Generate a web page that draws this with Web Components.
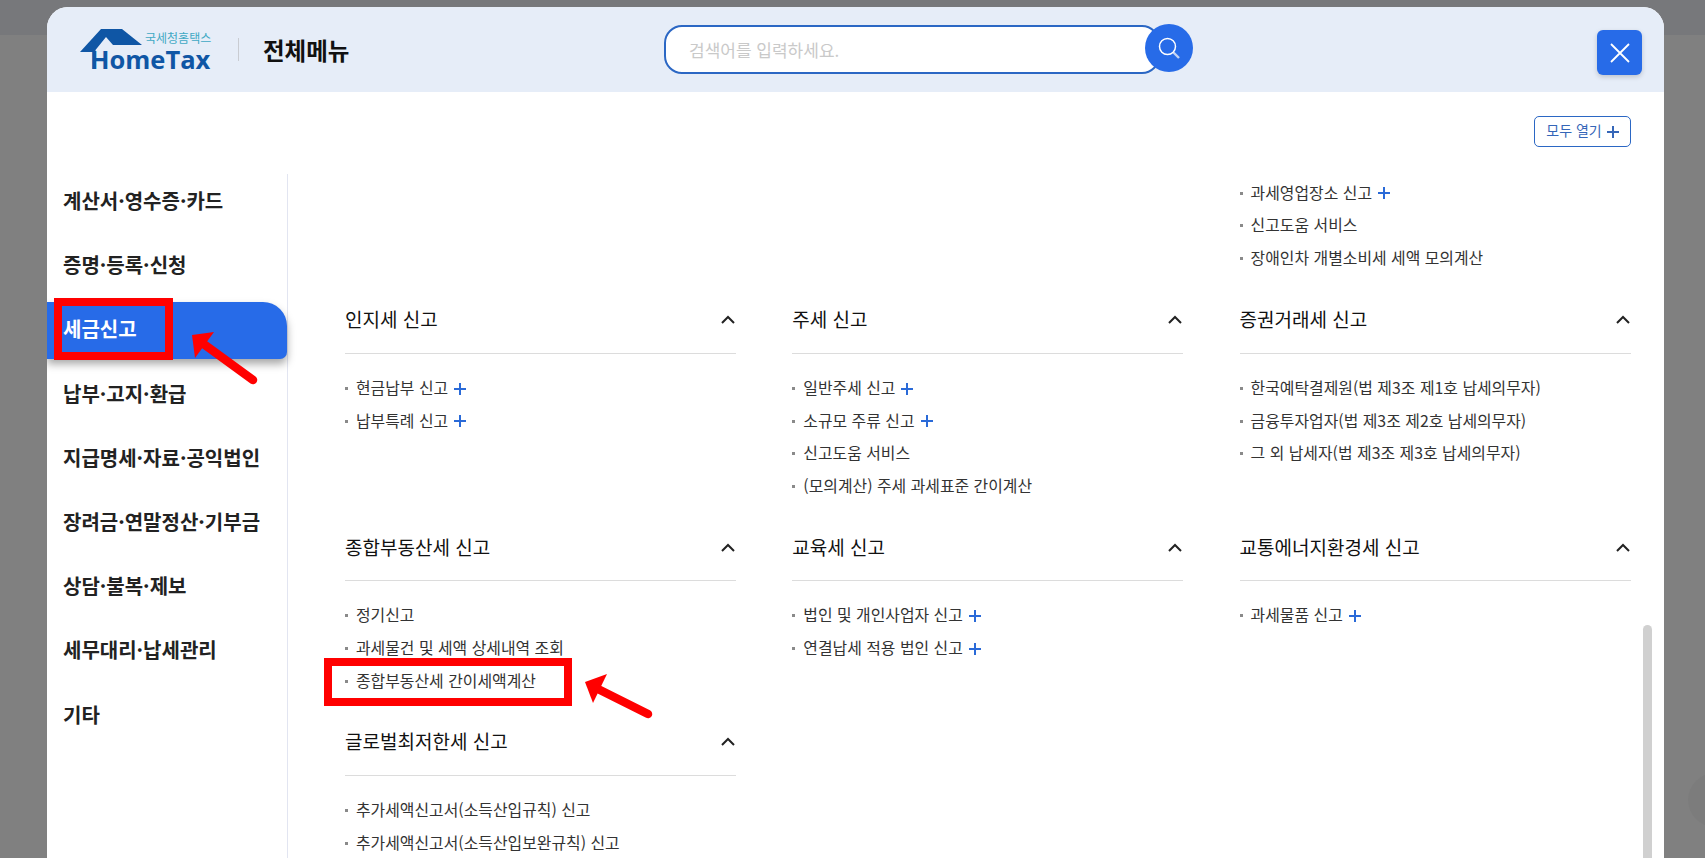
<!DOCTYPE html>
<html lang="ko">
<head>
<meta charset="utf-8">
<title>전체메뉴</title>
<style>
  html, body { margin: 0; height: 100%; overflow: hidden; }
  body { font-family: "Noto Sans CJK KR", "Noto Sans", sans-serif; background: #808080; }
</style>
</head>
<body>
<ht-backdrop>
  <ht-modal>
    <ht-logo slot="logo"></ht-logo>
    <ht-search slot="search" placeholder="검색어를 입력하세요."></ht-search>

    <ht-side-item slot="side">계산서·영수증·카드</ht-side-item>
    <ht-side-item slot="side">증명·등록·신청</ht-side-item>
    <ht-side-item slot="side" active>세금신고</ht-side-item>
    <ht-side-item slot="side">납부·고지·환급</ht-side-item>
    <ht-side-item slot="side">지급명세·자료·공익법인</ht-side-item>
    <ht-side-item slot="side">장려금·연말정산·기부금</ht-side-item>
    <ht-side-item slot="side">상담·불복·제보</ht-side-item>
    <ht-side-item slot="side">세무대리·납세관리</ht-side-item>
    <ht-side-item slot="side">기타</ht-side-item>

    <div></div>
    <div></div>
    <ht-section tail>
      <ht-link more>과세영업장소 신고</ht-link>
      <ht-link>신고도움 서비스</ht-link>
      <ht-link>장애인차 개별소비세 세액 모의계산</ht-link>
    </ht-section>

    <ht-section title="인지세 신고">
      <ht-link more>현금납부 신고</ht-link>
      <ht-link more>납부특례 신고</ht-link>
    </ht-section>
    <ht-section title="주세 신고">
      <ht-link more>일반주세 신고</ht-link>
      <ht-link more>소규모 주류 신고</ht-link>
      <ht-link>신고도움 서비스</ht-link>
      <ht-link>(모의계산) 주세 과세표준 간이계산</ht-link>
    </ht-section>
    <ht-section title="증권거래세 신고">
      <ht-link>한국예탁결제원(법 제3조 제1호 납세의무자)</ht-link>
      <ht-link>금융투자업자(법 제3조 제2호 납세의무자)</ht-link>
      <ht-link>그 외 납세자(법 제3조 제3호 납세의무자)</ht-link>
    </ht-section>

    <ht-section title="종합부동산세 신고">
      <ht-link>정기신고</ht-link>
      <ht-link>과세물건 및 세액 상세내역 조회</ht-link>
      <ht-link>종합부동산세 간이세액계산</ht-link>
    </ht-section>
    <ht-section title="교육세 신고">
      <ht-link more>법인 및 개인사업자 신고</ht-link>
      <ht-link more>연결납세 적용 법인 신고</ht-link>
    </ht-section>
    <ht-section title="교통에너지환경세 신고">
      <ht-link more>과세물품 신고</ht-link>
    </ht-section>

    <ht-section title="글로벌최저한세 신고">
      <ht-link>추가세액신고서(소득산입규칙) 신고</ht-link>
      <ht-link>추가세액신고서(소득산입보완규칙) 신고</ht-link>
    </ht-section>
  </ht-modal>
  <ht-marks></ht-marks>
</ht-backdrop>

<script>
class HtBackdrop extends HTMLElement {
  connectedCallback() {
    this.attachShadow({ mode: 'open' });
    this.shadowRoot.innerHTML = `
      <style>
        :host { display: block; position: relative; height: 100vh; overflow: hidden; background: #808080; }
        .band { height: 35px; background: #77787b; }
        .bubble {
          position: absolute; left: 1688px; top: 773px;
          width: 54px; height: 54px; border-radius: 50%;
          background: #7c7c7c;
        }
      </style>
      <div class="band"></div>
      <div class="bubble"></div>
      <slot></slot>
    `;
  }
}

class HtLogo extends HTMLElement {
  connectedCallback() {
    this.attachShadow({ mode: 'open' });
    this.shadowRoot.innerHTML = `
      <style>
        :host { display: block; position: relative; width: 132px; height: 42px; }
        svg { position: absolute; left: 0; top: 0; }
        .ko {
          position: absolute; left: 65px; top: 2px;
          font-size: 12px; line-height: 14px; color: #3fa9c4; white-space: nowrap;
        }
        .en {
          position: absolute; left: 10px; top: 20px;
          font: 700 25.5px/20px "Open Sans", sans-serif; color: #0f56a5;
          white-space: nowrap;
        }
      </style>
      <svg width="132" height="42" viewBox="0 0 132 42">
        <path fill="#0f56a5" d="M21 0H42L62 16H33L26 8 15.500 21V40H12.500V23H0Z"/>
      </svg>
      <span class="ko">국세청홈택스</span>
      <span class="en">HomeTax</span>
    `;
  }
}

class HtSearch extends HTMLElement {
  connectedCallback() {
    this.attachShadow({ mode: 'open' });
    this.shadowRoot.innerHTML = `
      <style>
        :host { display: block; position: relative; width: 530px; height: 49px; }
        .box {
          box-sizing: border-box; width: 496px; height: 49px;
          border: 2px solid #2b67c4; border-radius: 18px; background: #fff;
          padding: 0 23px; display: flex; align-items: center;
          font-size: 17px; color: #c9c9c9;
        }
        button {
          position: absolute; left: 481px; top: -1px;
          width: 48px; height: 48px; border: 0; padding: 0; border-radius: 50%;
          background: #276be8; display: flex; align-items: center; justify-content: center;
        }
      </style>
      <div class="box">${this.getAttribute('placeholder')}</div>
      <button aria-label="검색">
        <svg width="24" height="24" viewBox="0 0 24 24" fill="none">
          <path d="M16.500 16.500l5.500 5.500" stroke="#c4d4f4" stroke-width="2.400"/>
          <circle cx="10.500" cy="10.500" r="8" stroke="#fff" stroke-width="1.500"/>
        </svg>
      </button>
    `;
  }
}

class HtSideItem extends HTMLElement {
  connectedCallback() {
    this.attachShadow({ mode: 'open' });
    this.shadowRoot.innerHTML = `
      <style>
        :host {
          display: flex; align-items: center; box-sizing: border-box;
          height: 57px; margin-bottom: 7.2px; padding: 0 0 4px 16px;
          font-size: 20px; font-weight: 700; color: #222; white-space: nowrap;
        }
        :host([active]) {
          background: #276be8; color: #fff;
          border-radius: 0 24px 7px 0;
          box-shadow: 0 5px 8px rgba(0,0,0,.35);
        }
      </style>
      <slot></slot>
    `;
  }
}

class HtLink extends HTMLElement {
  connectedCallback() {
    this.attachShadow({ mode: 'open' });
    const more = this.hasAttribute('more') ? `
      <svg width="12" height="12" viewBox="0 0 12 12" stroke="#2a6ad8" stroke-width="2">
        <path d="M6 0V12M0 6H12"/>
      </svg>` : '';
    this.shadowRoot.innerHTML = `
      <style>
        :host {
          display: flex; align-items: center; gap: 6px; height: 32.6px;
          font-size: 15.9px; color: #333; white-space: nowrap;
        }
        .dot { width: 3px; height: 3px; background: #8a8a8a; margin-right: 2px; flex: none; }
        span.t { margin-top: -2px; }
      </style>
      <i class="dot"></i><span class="t"><slot></slot></span>${more}
    `;
  }
}

class HtSection extends HTMLElement {
  connectedCallback() {
    this.attachShadow({ mode: 'open' });
    const head = this.hasAttribute('tail') ? '' : `
      <header>
        <h3>${this.getAttribute('title')}</h3>
        <svg width="14" height="9" viewBox="0 0 14 9" fill="none" stroke="#222" stroke-width="2">
          <path d="M1 8L7 2l6 6"/>
        </svg>
      </header>`;
    this.shadowRoot.innerHTML = `
      <style>
        :host { display: block; margin-bottom: 26.5px; }
        :host([tail]) { margin-bottom: 27px; }
        header {
          display: flex; align-items: center; justify-content: space-between;
          height: 34px; padding-bottom: 17px; border-bottom: 1px solid #dcdcdc;
          margin-bottom: 18.5px;
        }
        h3 { margin: 0; font-size: 19px; font-weight: 400; color: #111; }
        svg { margin: 2px 1px 0 0; }
      </style>
      ${head}
      <slot></slot>
    `;
  }
}

class HtModal extends HTMLElement {
  connectedCallback() {
    this.attachShadow({ mode: 'open' });
    this.shadowRoot.innerHTML = `
      <style>
        :host {
          position: absolute; left: 47px; top: 7px; width: 1617px; bottom: 0;
          display: flex; flex-direction: column;
          background: #fff; border-radius: 21px 21px 0 0; overflow: hidden;
        }
        .top {
          flex: none; height: 85px; box-sizing: border-box;
          background: #e6edf8; display: flex; align-items: center;
          padding: 0 22px 0 33px;
        }
        .divider { width: 1px; height: 23px; background: #c9ccd2; margin: 0 24px 0 26px; }
        h2 { margin: 0; width: 401px; font-size: 23.5px; font-weight: 700; color: #111; white-space: nowrap; }
        .close {
          margin: 6px 0 0 auto; width: 45px; height: 45px; border: 0; padding: 0;
          border-radius: 6px; background: #276be8;
          box-shadow: 0 2px 5px rgba(0,0,0,.18);
          display: flex; align-items: center; justify-content: center;
        }
        .tools {
          flex: none; height: 82px; box-sizing: border-box;
          display: flex; justify-content: flex-end; align-items: flex-start;
          padding: 24px 33px 0 0;
        }
        .open-all {
          box-sizing: border-box; width: 97px; height: 31px;
          border: 1px solid #2b67c4; border-radius: 5px; background: #fff;
          display: flex; align-items: center; justify-content: center; gap: 5px;
          font: 14px "Noto Sans CJK KR", sans-serif; color: #3566b8; padding: 0;
        }
        .open-all span { margin-top: -4px; }
        .main { flex: 1; display: flex; min-height: 0; position: relative; }
        .side { flex: none; width: 240px; border-right: 1px solid #e2e5f1; }
        .scroll {
          flex: 1; overflow: hidden; padding: 3px 33px 0 57px;
          display: grid; grid-template-columns: repeat(3, 391px); column-gap: 56.3px;
          align-content: start;
        }
        .thumb {
          position: absolute; left: 1596px; top: 451px; bottom: 0; width: 9px;
          background: #d0d0d0; border-radius: 5px 5px 0 0;
        }
      </style>
      <div class="top">
        <slot name="logo"></slot>
        <i class="divider"></i>
        <h2>전체메뉴</h2>
        <slot name="search"></slot>
        <button class="close" aria-label="닫기">
          <svg width="22" height="22" viewBox="0 0 22 22" stroke="#fff" stroke-width="1.800">
            <path d="M2 2L20 20M20 2L2 20"/>
          </svg>
        </button>
      </div>
      <div class="tools">
        <button class="open-all"><span>모두 열기</span>
          <svg width="12" height="12" viewBox="0 0 12 12" stroke="#3566b8" stroke-width="2">
            <path d="M6 0V12M0 6H12"/>
          </svg>
        </button>
      </div>
      <div class="main">
        <div class="side"><slot name="side"></slot></div>
        <div class="scroll"><slot></slot></div>
        <div class="thumb"></div>
      </div>
    `;
  }
}

// red boxes and arrows drawn on top of the screenshot
class HtMarks extends HTMLElement {
  connectedCallback() {
    this.attachShadow({ mode: 'open' });
    this.shadowRoot.innerHTML = `
      <style>
        :host { position: absolute; inset: 0; pointer-events: none; }
        svg { position: absolute; left: 0; top: 0; }
      </style>
      <svg width="1705" height="858" viewBox="0 0 1705 858">
        <g fill="none" stroke="#f00" stroke-width="8">
          <rect x="58" y="302" width="111" height="54"/>
          <rect x="328" y="662" width="240" height="40"/>
        </g>
        <g fill="none" stroke="#f00" stroke-width="8.500" stroke-linecap="round">
          <path d="M205 345L253 380"/>
          <path d="M598 689L648 714"/>
        </g>
        <g fill="#f00">
          <path d="M192 335L214 332 195 358Z"/>
          <path d="M585 682L607 674 593 703Z"/>
        </g>
      </svg>
    `;
  }
}

customElements.define('ht-backdrop', HtBackdrop);
customElements.define('ht-logo', HtLogo);
customElements.define('ht-search', HtSearch);
customElements.define('ht-side-item', HtSideItem);
customElements.define('ht-link', HtLink);
customElements.define('ht-section', HtSection);
customElements.define('ht-modal', HtModal);
customElements.define('ht-marks', HtMarks);
</script>
</body>
</html>
